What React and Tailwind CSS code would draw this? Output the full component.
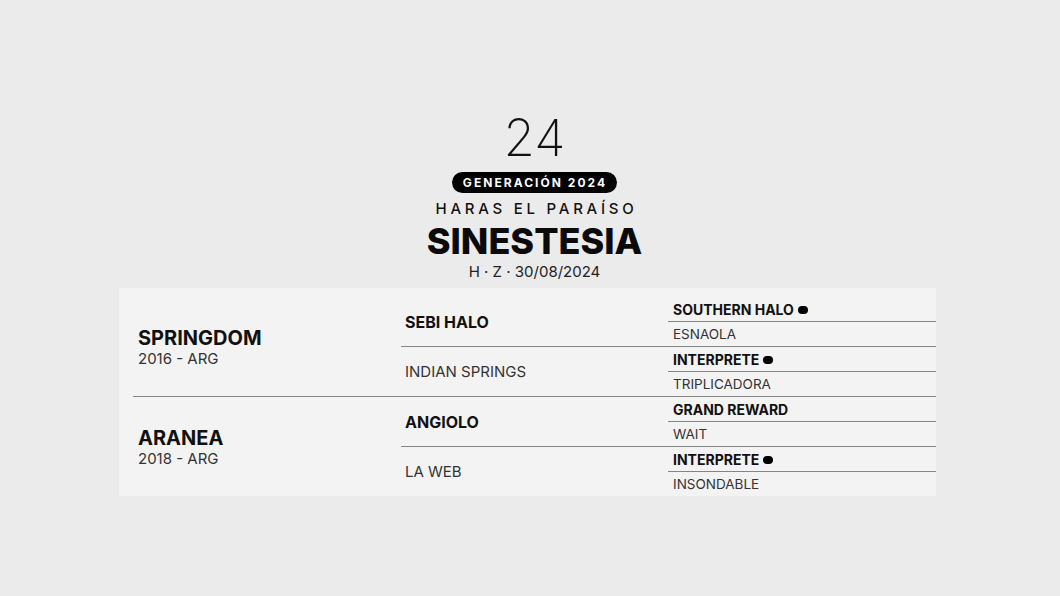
import React from "react";

const font = { fontFamily: "Inter, 'Liberation Sans', sans-serif" };

function Dot() {
  return <span className="inline-block w-[10px] h-[8px] rounded-full bg-black ml-[4px] align-middle relative top-[1px]" />;
}

function C3({ name, bold, dot, last }) {
  return (
    <div className={`${last ? "flex-1" : "h-[25px] border-b border-[#858585]"} flex items-center pl-[5px] ${bold ? "text-[14px] font-bold text-[#111]" : "text-[13.5px] text-[#333] pt-[1px]"}`}>
      <span>{name}</span>
      {dot && <Dot />}
    </div>
  );
}

function SubRow({ parent, parentBold, gs, top }) {
  return (
    <div className={`flex-1 flex ${top ? "" : "border-t border-[#858585]"}`}>
      <div className={`w-[267px] flex items-center pl-[4px] ${parentBold ? "text-[16px] font-bold text-[#111] pt-[1px]" : "text-[15px] text-[#333] pt-[2px]"}`}>
        {parent}
      </div>
      <div className="w-[268px] flex flex-col">
        <C3 name={gs[0].name} bold dot={gs[0].dot} />
        <C3 name={gs[1].name} last />
      </div>
    </div>
  );
}

function Block({ name, info, sub, first }) {
  return (
    <div className={`flex ${first ? "h-[99px]" : "h-[100px] border-t border-[#858585]"}`}>
      <div className="w-[268px] flex flex-col justify-center pl-[5px] pt-[3px]">
        <div className="text-[20px] font-bold text-[#111] leading-[22px]">{name}</div>
        <div className="text-[15px] text-[#333] leading-[20px]">{info}</div>
      </div>
      <div className="flex flex-col">
        <SubRow top parent={sub[0].parent} parentBold gs={sub[0].gs} />
        <SubRow parent={sub[1].parent} gs={sub[1].gs} />
      </div>
    </div>
  );
}

export default function App() {
  return (
    <div className="w-[1060px] h-[596px] bg-[#ebebeb] flex flex-col items-center pt-[112px] pl-[9px]" style={font}>
      <div className="text-[51px] leading-[52px] font-extralight text-[#111]">24</div>
      <div className="mt-[8px] h-[21px] px-[10px] rounded-full bg-black flex items-center text-white text-[12px] font-bold tracking-[0.17em] pl-[11px]">
        GENERACIÓN 2024
      </div>
      <div className="mt-[6px] text-[15px] leading-[20px] font-medium tracking-[0.25em] text-[#111] pl-[4px]">HARAS EL PARAÍSO</div>
      <div className="mt-[2px] text-[36px] leading-[40px] font-extrabold text-[#0a0a0a]">SINESTESIA</div>
      <div className="mt-[1px] text-[15px] leading-[20px] text-[#222]">H · Z · 30/08/2024</div>
      <div className="mt-[6px] self-start ml-[110px] w-[817px] h-[208px] bg-[#f3f3f3] pt-[9px] pl-[14px]">
        <Block
          first
          name="SPRINGDOM"
          info="2016 - ARG"
          sub={[
            { parent: "SEBI HALO", gs: [{ name: "SOUTHERN HALO", dot: true }, { name: "ESNAOLA" }] },
            { parent: "INDIAN SPRINGS", gs: [{ name: "INTERPRETE", dot: true }, { name: "TRIPLICADORA" }] },
          ]}
        />
        <Block
          name="ARANEA"
          info="2018 - ARG"
          sub={[
            { parent: "ANGIOLO", gs: [{ name: "GRAND REWARD" }, { name: "WAIT" }] },
            { parent: "LA WEB", gs: [{ name: "INTERPRETE", dot: true }, { name: "INSONDABLE" }] },
          ]}
        />
      </div>
    </div>
  );
}
